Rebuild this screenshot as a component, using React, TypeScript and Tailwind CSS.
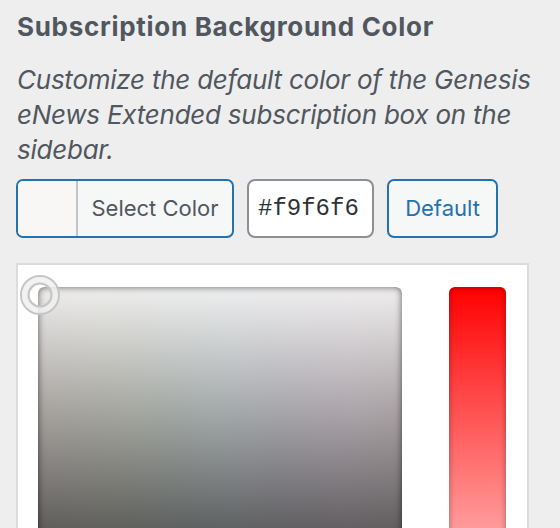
import React from "react";

export default function App() {
  const sans = { fontFamily: "Inter, 'Noto Sans', sans-serif" };
  return (
    <div
      className="w-[560px] h-[528px] overflow-hidden bg-[#eeeeee] pl-[16px] pt-[11px]"
      style={sans}
    >
      <h2 className="text-[26px] leading-[32px] font-bold text-[#50575e] pl-[1px] tracking-[0.7px]">
        Subscription Background Color
      </h2>
      <p className="mt-[19px] w-[530px] pl-[1px] text-[26px] leading-[35px] italic text-[#50575e] tracking-[-0.24px]">
        Customize the default color of the Genesis
        <br />
        eNews Extended subscription box on the
        <br />
        sidebar.
      </p>
      <div className="mt-[12px] flex items-center h-[59px]">
        <button className="flex h-[59px] w-[218px] overflow-hidden rounded-[7px] border-2 border-[#2271b1] bg-[#f6f7f7]">
          <span className="h-full w-[60px] bg-[#f9f6f6] border-r-2 border-[#c3c4c7]" />
          <span className="flex-1 flex items-center justify-center text-[22px] text-[#50575e]">
            Select Color
          </span>
        </button>
        <div className="ml-[13px] flex h-[59px] w-[127px] items-center rounded-[8px] border-2 border-[#8c8f94] bg-white pl-[9px]">
          <span
            className="text-[24px] text-[#2c3338]"
            style={{ fontFamily: "'Liberation Mono', 'DejaVu Sans Mono', monospace" }}
          >
            #f9f6f6
          </span>
        </div>
        <button className="ml-[13px] flex h-[59px] w-[111px] items-center justify-center rounded-[7px] border-2 border-[#2271b1] bg-[#f6f7f7] text-[22px] text-[#2271b1]">
          Default
        </button>
      </div>
      <div className="relative mt-[25px] w-[513px] h-[420px] border-2 border-[#dcdcde] bg-white pl-[20px] pt-[22px] flex">
        <div
          className="w-[364px] h-[364px] rounded-[6px] shadow-[inset_0_0_7px_rgba(0,0,0,0.6)]"
          style={{
            backgroundImage:
              "linear-gradient(to bottom, rgba(255,255,255,0.82) 0%, rgba(255,255,255,0) 34%, rgba(0,0,0,0) 34%, rgba(0,0,0,0.42) 66%, rgba(0,0,0,0.8) 100%), linear-gradient(to right, hsl(25,4%,64%) 0%, hsl(70,4%,64%) 22%, hsl(150,3%,65%) 38%, hsl(200,4%,66%) 52%, hsl(260,3%,66%) 68%, hsl(310,4%,66%) 85%, hsl(350,4%,65%) 100%)",
          }}
        />
        <div
          className="ml-[47px] w-[57px] h-[364px] rounded-[6px] shadow-[inset_0_0_6px_rgba(0,0,0,0.35)]"
          style={{
            backgroundImage:
              "linear-gradient(to bottom, #ff0000 0%, #ff4a4a 31%, #ff9a9a 66%, #ffdede 100%)",
          }}
        />
        <svg
          className="absolute left-[0px] top-[8px]"
          width="44"
          height="44"
          viewBox="0 0 44 44"
        >
          <circle cx="22" cy="22" r="15" fill="none" stroke="rgba(240,240,240,0.85)" strokeWidth="6" />
          <circle cx="22" cy="22" r="19" fill="none" stroke="#c6c6c6" strokeWidth="2" />
          <circle cx="22" cy="22" r="11.5" fill="none" stroke="#c6c6c6" strokeWidth="2.2" />
        </svg>
      </div>
    </div>
  );
}
